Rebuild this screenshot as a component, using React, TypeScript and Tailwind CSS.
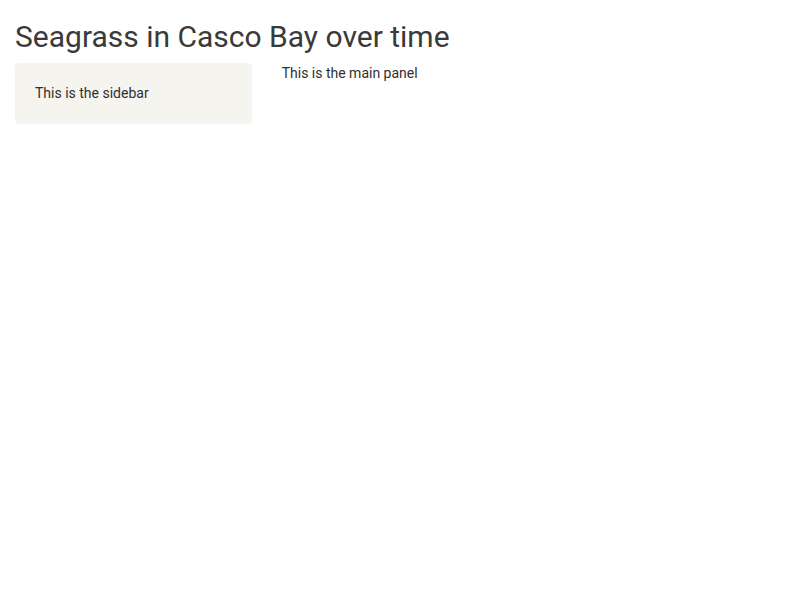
import React from "react";

export default function App() {
  return (
    <div
      className="min-h-screen bg-white px-[15px] text-[14px] leading-[20px] text-[#2f2f2f]"
      style={{ fontFamily: "Roboto, 'Liberation Sans', sans-serif" }}
    >
      <h2 className="mt-[20px] mb-[10px] text-[30px] leading-[33px] font-normal text-[#3a3a3a]">
        Seagrass in Casco Bay over time
      </h2>
      <div className="-mx-[15px] flex">
        <div className="w-1/3 px-[15px]">
          <div className="min-h-[20px] mb-[20px] rounded-[4px] border border-[#f6f4ef] bg-[#f6f4ef] p-[19px] shadow-[0_1px_1px_rgba(0,0,0,0.04)]">
            This is the sidebar
          </div>
        </div>
        <div className="w-2/3 px-[15px]">This is the main panel</div>
      </div>
    </div>
  );
}
